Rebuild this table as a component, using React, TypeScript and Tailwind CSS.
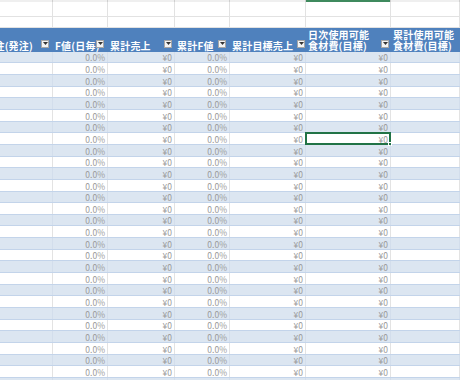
import React from "react";

type Col = { w: string; btn?: string };

const cols: Col[] = [
  { w: "w-[53px]", btn: "right-[4px]" },
  { w: "w-[55px]", btn: "right-[4px]" },
  { w: "w-[67px]", btn: "right-[3px]" },
  { w: "w-[55px]", btn: "right-[4px]" },
  { w: "w-[76px]", btn: "right-[1px]" },
  { w: "w-[85px]", btn: "right-[2px]" },
  { w: "flex-1" },
];

const headers: string[][] = [
  ["食材発注(発注)"],
  ["F値(日毎)"],
  ["累計売上"],
  ["累計F値"],
  ["累計目標売上"],
  ["日次使用可能", "食材費(目標)"],
  ["累計使用可能", "食材費(目標)"],
];

const values = ["", "0.0%", "¥0", "0.0%", "¥0", "¥0", ""];

const jp = { fontFamily: '"Noto Sans CJK JP", "Noto Sans", sans-serif' };

function DropBtn({ pos }: { pos: string }) {
  return (
    <div
      className={`absolute bottom-[4px] ${pos} z-10 flex h-[8px] w-[8px] items-center justify-center border border-[#a6a6a6] bg-[#f4f4f4]`}
    >
      <svg width="5" height="3" viewBox="0 0 5 3">
        <path d="M0 0 L5 0 L2.5 3 Z" fill="#333" />
      </svg>
    </div>
  );
}

function GridRow({ h }: { h: string }) {
  return (
    <div className={`flex ${h} border-b border-[#e2e2e2] bg-white`}>
      {cols.map((c, i) => (
        <div key={i} className={`${c.w} h-full border-r border-[#e2e2e2]`} />
      ))}
    </div>
  );
}

export default function App() {
  const rows = Array.from({ length: 29 }, (_, i) => i);
  return (
    <div className="h-[380px] w-[460px] overflow-hidden bg-white" style={jp}>
      {/* excel column header strip */}
      <div className="flex h-[2px] bg-[#efefef]">
        {cols.map((c, i) => (
          <div
            key={i}
            className={`${c.w} h-full border-r ${i === 5 ? "border-r-[#cfcfcf] bg-[#3f8a5e]" : "border-[#cfcfcf]"}`}
          />
        ))}
      </div>
      <GridRow h="h-[14.67px]" />
      <GridRow h="h-[11.67px]" />

      {/* table header */}
      <div className="flex h-[23.33px] bg-[#4f81bd]">
        {cols.map((c, i) => (
          <div
            key={i}
            className={`${c.w} relative flex h-full flex-col overflow-hidden whitespace-nowrap text-[10px] font-bold leading-[11.5px] tracking-[0.2px] text-white ${
              i === 0 ? "items-end justify-end pr-[20px]" : "justify-end pl-[2px]"
            }`}
          >
            {headers[i].map((t, k) => (
              <div key={k}>{t}</div>
            ))}
            {c.btn && <DropBtn pos={c.btn} />}
          </div>
        ))}
      </div>

      {/* data rows */}
      {rows.map((r) => {
        const blue = r % 2 === 0;
        return (
          <div
            key={r}
            className={`flex h-[11.667px] border-b border-[#c3d4ea] ${blue ? "bg-[#dce6f1]" : "bg-white"}`}
          >
            {cols.map((c, i) => (
              <div
                key={i}
                className={`${c.w} relative flex h-full items-end justify-end border-r pr-[2px] text-[8.5px] leading-[10px] text-[#9a9a9a] ${
                  blue ? "border-[#d3deec]" : "border-[#e3e3e3]"
                }`}
              >
                {values[i]}
                {r === 7 && i === 5 && (
                  <div className="pointer-events-none absolute inset-[-1px] border-2 border-[#217346]">
                    <div className="absolute bottom-[-3px] right-[-3px] h-[4px] w-[4px] border border-white bg-[#217346]" />
                  </div>
                )}
              </div>
            ))}
          </div>
        );
      })}
    </div>
  );
}
